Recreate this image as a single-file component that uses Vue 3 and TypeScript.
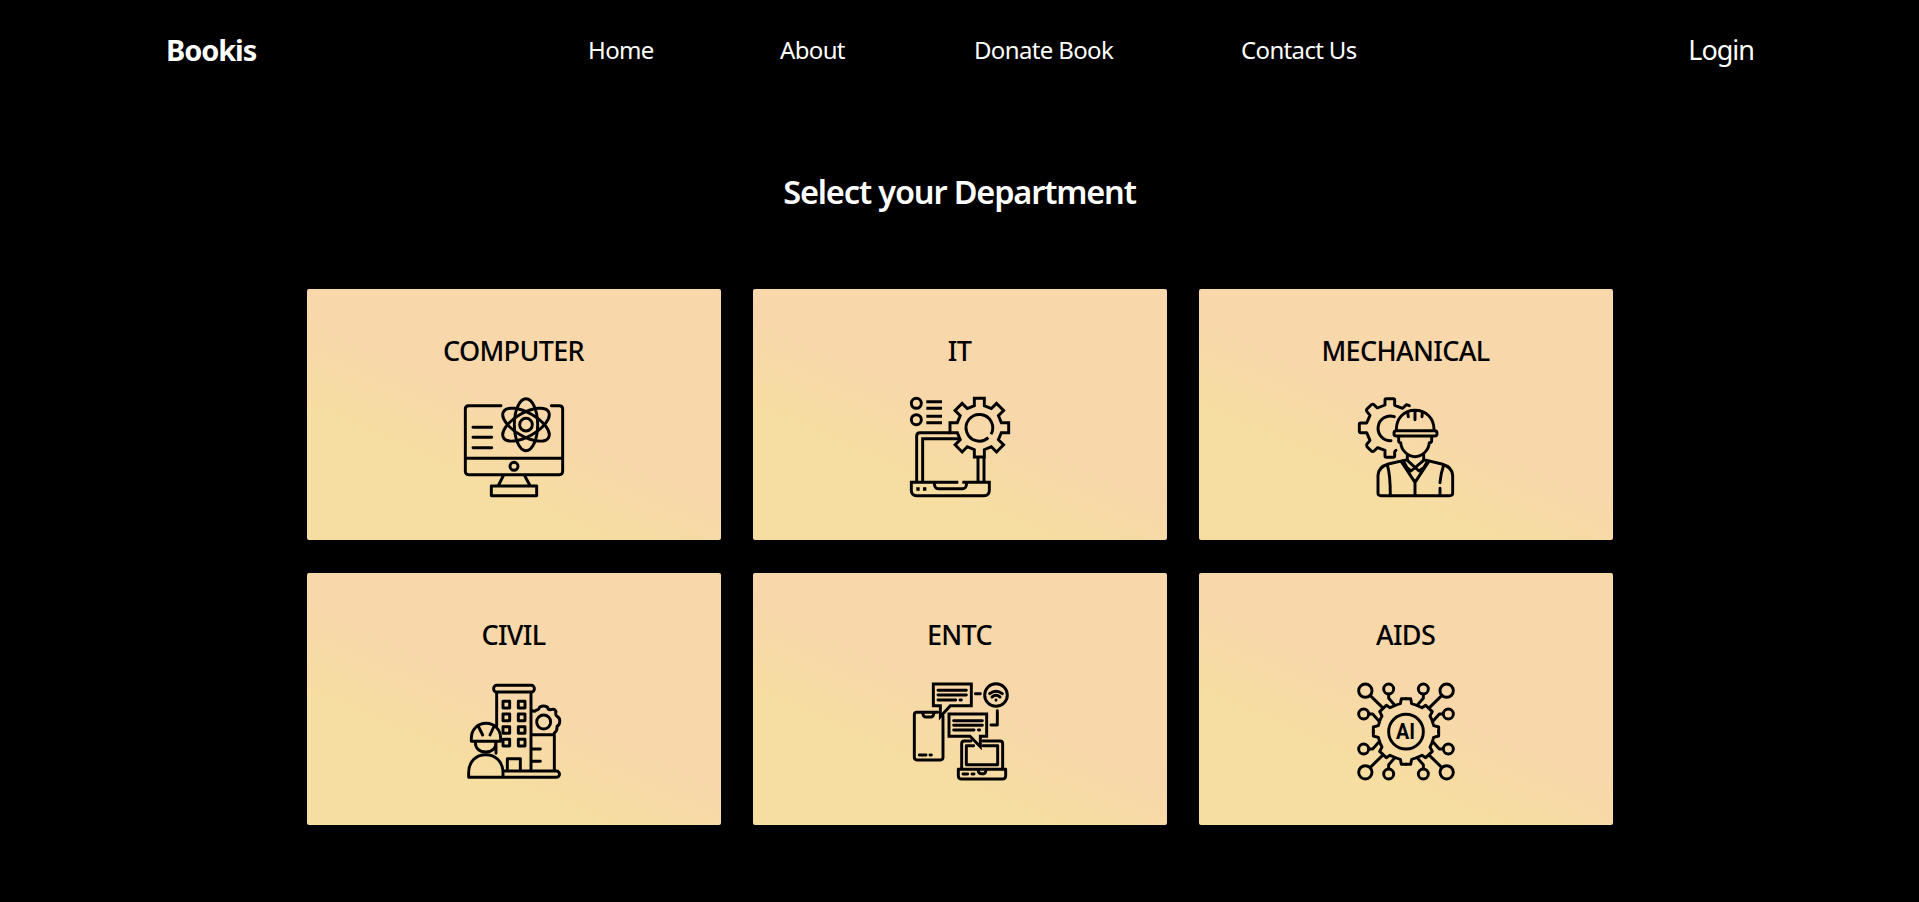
<script setup lang="ts">
const links: string[] = ['Home', 'About', 'Donate Book', 'Contact Us']

interface Department {
  id: string
  name: string
  viewBox: string
}

const departments: Department[] = [
  { id: 'computer', name: 'COMPUTER', viewBox: '42 36 300 300' },
  { id: 'it', name: 'IT', viewBox: '45 36 300 300' },
  { id: 'mechanical', name: 'MECHANICAL', viewBox: '33 36 300 300' },
  { id: 'civil', name: 'CIVIL', viewBox: '42 33 300 300' },
  { id: 'entc', name: 'ENTC', viewBox: '45 33 300 300' },
  { id: 'aids', name: 'AIDS', viewBox: '33 33 300 300' },
]

/** Outline of a cog whose teeth have straight, slightly tapered sides. */
function gear(cx: number, cy: number, outer: number, inner: number, top: number, base: number): string {
  const points: string[] = []
  for (let i = 0; i < 8; i++) {
    const a = (i * Math.PI) / 4
    const corners = [[inner, -base], [outer, -top], [outer, top], [inner, base]]
    for (const [r, t] of corners) {
      const x = cx + r * Math.cos(a) - t * Math.sin(a)
      const y = cy + r * Math.sin(a) + t * Math.cos(a)
      points.push(`${x.toFixed(1)} ${y.toFixed(1)}`)
    }
  }
  return `M${points.join('L')}Z`
}

const laptopGear = gear(253, 128, 88, 66, 15, 15)

// The AI chip is symmetric: one quadrant is drawn four times.
const quadrants: string[] = [
  '',
  'matrix(-1 0 0 1 366 0)',
  'matrix(1 0 0 -1 0 369)',
  'matrix(-1 0 0 -1 366 369)',
]
</script>

<template>
  <div class="page">
    <header class="bar">
      <a class="brand">Bookis</a>
      <nav class="links">
        <a v-for="link in links" :key="link">{{ link }}</a>
      </nav>
      <a class="login">Login</a>
    </header>
    <main>
      <h1>Select your Department</h1>
      <section class="grid">
        <article v-for="d in departments" :key="d.id" class="card">
          <h2>{{ d.name }}</h2>
          <svg class="icon" :viewBox="d.viewBox" aria-hidden="true">
            <g v-if="d.id === 'computer'">
              <path d="M153 62H56Q46 62 46 72V259Q46 269 56 269H328Q338 269 338 259V72Q338 62 328 62H304M46 220H338M161 270L146 300M223 270L239 300M69 127H125M69 157H125M69 188H125" />
              <rect x="124" y="303" width="136" height="29" />
              <circle cx="192" cy="244" r="12" />
              <circle cx="228" cy="119" r="19" />
              <ellipse cx="228" cy="119" rx="35" ry="78" />
              <ellipse cx="228" cy="119" rx="35" ry="78" transform="rotate(60 228 119)" />
              <ellipse cx="228" cy="119" rx="35" ry="78" transform="rotate(-60 228 119)" />
            </g>
            <g v-else-if="d.id === 'it'" class="square">
              <circle cx="64" cy="55" r="15" />
              <circle cx="64" cy="104" r="15" />
              <path d="M94 50H141M94 70H141M94 94H141M94 113H141" />
              <path d="M65 290V153Q65 143 75 143H166M83 290V161H195M249 217V290M267 217V290" />
              <path d="M190 292H49V316Q49 332 65 332H267Q283 332 283 316V292H202M118 294Q118 311 130 311H204Q214 311 215 294" />
              <path :d="laptopGear" />
              <path d="M280 158A40 40 0 1 1 288 148" />
              <path class="solid" d="M64 307h10v10h-10zM84 307h10v10h-10z" />
            </g>
            <g v-else-if="d.id === 'mechanical'">
              <path d="M193 62L184 59L173 70L149 61V45Q149 41 145 41H123Q120 41 120 45V60L97 69L87 59Q83 56 79 59L66 72Q63 75 66 80L75 91L65 114H47Q43 114 43 118V139Q43 143 47 143H65L75 166L66 177Q63 181 66 185L79 198Q83 201 87 198L98 188L120 196V213Q120 217 124 217H145Q149 217 149 213V200L153 196" />
              <path d="M148 95A37 37 0 1 0 138 167" />
              <path d="M154 134C154 98 178 76 210 76S267 98 267 134M210 78V104M188 83L190 95M232 83L231 95" />
              <rect x="147" y="137" width="129" height="16" rx="7" />
              <path d="M161 156V167Q161 173 167 173C169 198 190 215 210 215S251 198 253 173Q260 173 260 167V156" />
              <path d="M187 210V224L130 237Q100 246 99 271V325Q99 332 108 332H314Q323 332 323 325V271Q322 246 290 237L236 224V210" />
              <path d="M127 240C136 268 136 300 136 332M296 240C286 270 286 285 285 293M285 310V332M169 230L210 292V332M251 230L210 292M187 226L222 258L236 248L246 231M236 226L198 258L186 248L177 231" />
            </g>
            <g v-else-if="d.id === 'civil'">
              <rect x="131" y="46" width="122" height="20" rx="9" />
              <path d="M140 68V168M243 68V300M172 300V266H211V300" />
              <template v-for="y in [94, 132, 170, 208]" :key="y">
                <rect x="159" :y="y" width="20" height="20" />
                <rect x="205" :y="y" width="20" height="20" />
              </template>
              <path d="M64 214V205C64 178 83 160 108 160S152 178 152 205V214ZM86 171L98 195M131 171L120 195M76 216C76 235 88 246 107 246S138 235 138 216V250" />
              <path d="M56 322V308C56 275 78 254 107 254S159 275 159 308V322ZM160 303H319A9.5 9.5 0 0 1 319 322H160" />
              <path d="M246 121Q253 127 259 120Q267 120 269 111Q281 105 292 111Q295 121 303 119Q314 115 318 125Q315 135 321 139Q331 144 329 156Q329 165 321 169Q322 184 313 189M245 194H313V300M246 237H271M246 274H271" />
              <circle cx="281" cy="156" r="21" />
            </g>
            <g v-else-if="d.id === 'entc'">
              <path d="M128 127H66Q58 127 58 135V262Q58 270 66 270H136Q144 270 144 262V138M83 129Q85 141 92 141H108Q115 141 117 129M73 255H93M105 255H109" />
              <path class="square" d="M115 42H229V107H166L136 140V107H115Z" />
              <path d="M129 61H214M129 75H214M129 90H182M195 90H199M241 71H256M307 122V165H288" />
              <circle cx="303" cy="75" r="34" />
              <path d="M284 71Q303 56 322 71M291 81Q303 71 315 81M303 90V91" />
              <path class="square" d="M162 132H275V199H256V230L225 199H162Z" />
              <path d="M176 152H262M176 166H262M176 180H237M250 180H254" />
              <path d="M200 296V221Q200 213 208 213H228M262 213H315Q323 213 323 221V296M236 227H214V284H308V227H264" />
              <path d="M190 298H332V317Q332 327 322 327H200Q190 327 190 317ZM249 299Q250 311 258 311H266Q272 311 273 299M204 312H218M231 312H237" />
            </g>
            <g v-else>
              <g v-for="q in quadrants" :key="q" :transform="q || undefined">
                <path d="M183 86H169L166 101Q155 104 147 108L135 113L124 106L104 125L111 138Q105 148 102 160L100 167L85 171V185" />
                <circle cx="61" cy="62" r="20" />
                <circle cx="131" cy="57" r="15" />
                <circle cx="56" cy="132" r="15" />
                <path d="M76 77L112 112M131 73V85L149 105M72 132H83L101 152" />
              </g>
              <circle cx="183" cy="185" r="52" />
              <text x="153" y="208" textLength="57" lengthAdjust="spacingAndGlyphs">AI</text>
            </g>
          </svg>
        </article>
      </section>
    </main>
  </div>
</template>

<style>
body {
  background: #000;
}
</style>

<style scoped>
.page {
  min-height: 902px;
  background: #000;
  color: #fff;
  font-family: "Noto Sans", "Open Sans", sans-serif;
  overflow: hidden;
}

.bar {
  box-sizing: border-box;
  height: 100px;
  padding: 0 165px 2px 166px;
  display: flex;
  align-items: center;
  justify-content: space-between;
  white-space: nowrap;
}

.brand {
  width: 422px;
  font-size: 29px;
  font-weight: 700;
  letter-spacing: -1.1px;
}

.links {
  flex: 1;
  display: grid;
  grid-template-columns: 64px 66px 139px 116px;
  column-gap: 128px;
  font-size: 24px;
  letter-spacing: -0.65px;
}

.login {
  font-size: 27px;
  letter-spacing: -1px;
}

h1 {
  margin: 70px 0 0;
  height: 44px;
  line-height: 44px;
  text-align: center;
  font-size: 32.5px;
  font-weight: 600;
  letter-spacing: -1.15px;
}

.grid {
  width: 1306px;
  margin: 75px auto 0;
  display: grid;
  grid-template-columns: repeat(3, 414px);
  grid-template-rows: 251px 252px;
  column-gap: 32px;
  row-gap: 33px;
}

.card {
  display: flex;
  flex-direction: column;
  align-items: center;
  border-radius: 2px;
  color: #000;
  background: linear-gradient(24deg, #f6dda1 30%, #f8d7ab 54%);
}

h2 {
  margin: 44px 0 0;
  height: 36px;
  line-height: 35px;
  font-size: 27px;
  font-weight: 550;
  letter-spacing: -0.65px;
}

.icon {
  width: 100px;
  height: 100px;
  margin-top: 28px;
  overflow: visible;
  fill: none;
  stroke: #000;
  stroke-width: 8.8;
  stroke-linecap: round;
  stroke-linejoin: round;
}

.square {
  stroke-linecap: butt;
  stroke-linejoin: miter;
}

.solid {
  fill: #000;
  stroke: none;
}

text {
  fill: #000;
  stroke: none;
  font-family: Roboto, sans-serif;
  font-size: 64px;
  font-weight: 700;
}
</style>
